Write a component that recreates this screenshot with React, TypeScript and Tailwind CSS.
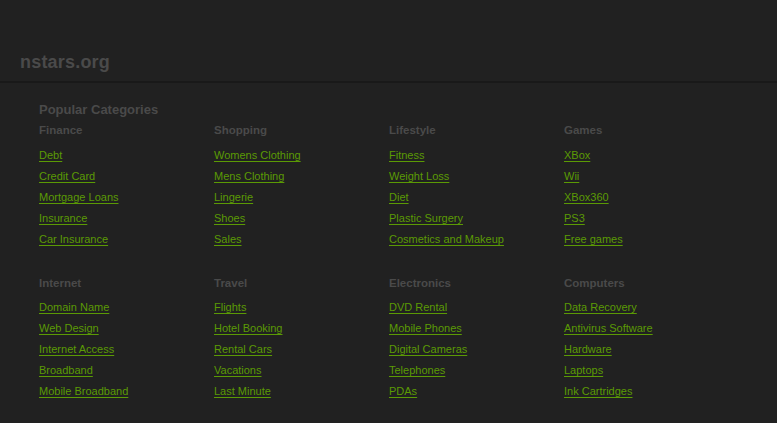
import React from 'react';

interface Category {
  title: string;
  links: string[];
}

const rows: Category[][] = [
  [
    { title: 'Finance', links: ['Debt', 'Credit Card', 'Mortgage Loans', 'Insurance', 'Car Insurance'] },
    { title: 'Shopping', links: ['Womens Clothing', 'Mens Clothing', 'Lingerie', 'Shoes', 'Sales'] },
    { title: 'Lifestyle', links: ['Fitness', 'Weight Loss', 'Diet', 'Plastic Surgery', 'Cosmetics and Makeup'] },
    { title: 'Games', links: ['XBox', 'Wii', 'XBox360', 'PS3', 'Free games'] },
  ],
  [
    { title: 'Internet', links: ['Domain Name', 'Web Design', 'Internet Access', 'Broadband', 'Mobile Broadband'] },
    { title: 'Travel', links: ['Flights', 'Hotel Booking', 'Rental Cars', 'Vacations', 'Last Minute'] },
    { title: 'Electronics', links: ['DVD Rental', 'Mobile Phones', 'Digital Cameras', 'Telephones', 'PDAs'] },
    { title: 'Computers', links: ['Data Recovery', 'Antivirus Software', 'Hardware', 'Laptops', 'Ink Cartridges'] },
  ],
];

const App = () => {
  return (
    <div className="min-h-[423px] bg-[#212121] font-['Liberation_Sans',Arial,sans-serif]">
      {/* Header */}
      <div className="h-[83px] flex items-end px-5 pb-[8px] border-b-2 border-[#191919]">
        <span className="text-[18px] leading-[21px] font-bold tracking-[0.2px] text-[#4a4a4a]">nstars.org</span>
      </div>

      <div className="pl-[39px] pt-[19px]">
        <h2 className="text-[13px] leading-[16px] font-bold text-[#4a4a4a]">Popular Categories</h2>

        {rows.map((row, i) => (
          <div key={i} className={`grid grid-cols-[175px_175px_175px_175px] ${i === 0 ? 'mt-[5px]' : 'mt-[26px]'}`}>
            {row.map((cat) => (
              <div key={cat.title}>
                <h3 className="text-[11.5px] leading-[14px] font-bold text-[#4a4a4a]">{cat.title}</h3>
                <ul className={i === 0 ? 'mt-[8px]' : 'mt-[7px]'}>
                  {cat.links.map((l) => (
                    <li key={l} className="text-[11px] leading-[21px]">
                      <a href="#" className="text-[#5b9a04] underline underline-offset-[2px]">
                        {l}
                      </a>
                    </li>
                  ))}
                </ul>
              </div>
            ))}
          </div>
        ))}
      </div>
    </div>
  );
};

export default App;
